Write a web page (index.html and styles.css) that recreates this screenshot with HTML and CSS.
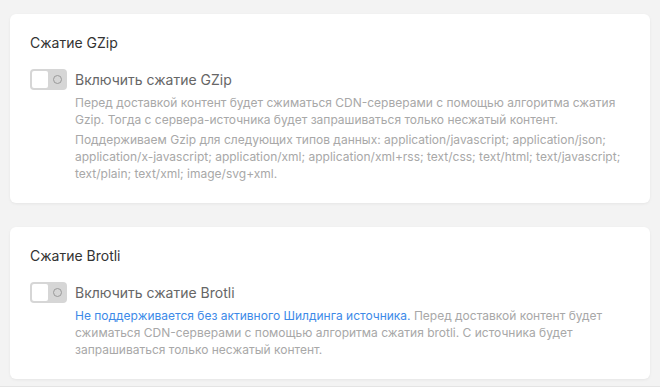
FILE: index.html
```html
<!DOCTYPE html>
<html lang="ru">
<head>
    <meta charset="UTF-8">
    <meta name="viewport" content="width=device-width, initial-scale=1.0">
    <title>Сжатие</title>
    <link rel="stylesheet" href="styles.css">
</head>
<body>
    <div class="page">
        <div class="card">
            <h3 class="card-title">Сжатие GZip</h3>
            <div class="option">
                <span class="toggle"><span class="knob"></span><span class="off-mark"></span></span>
                <div class="option-body">
                    <div class="option-label">Включить сжатие GZip</div>
                    <p class="hint">Перед доставкой контент будет сжиматься CDN-серверами с помощью алгоритма сжатия Gzip. Тогда с сервера-источника будет запрашиваться только несжатый контент.</p>
                    <p class="hint">Поддерживаем Gzip для следующих типов данных: application/javascript; application/json; application/x-javascript; application/xml; application/xml+rss; text/css; text/html; text/javascript; text/plain; text/xml; image/svg+xml.</p>
                </div>
            </div>
        </div>

        <div class="card">
            <h3 class="card-title">Сжатие Brotli</h3>
            <div class="option">
                <span class="toggle"><span class="knob"></span><span class="off-mark"></span></span>
                <div class="option-body">
                    <div class="option-label">Включить сжатие Brotli</div>
                    <p class="hint"><span class="link">Не поддерживается без активного Шилдинга источника.</span> Перед доставкой контент будет сжиматься CDN-серверами с помощью алгоритма сжатия brotli. С источника будет запрашиваться только несжатый контент.</p>
                </div>
            </div>
        </div>
    </div>
    <div class="footer"></div>
</body>
</html>
```

FILE: styles.css
```css
body {
    margin: 0;
    background-color: #f3f3f3;
    font-family: Inter, "Noto Sans", sans-serif;
}

.page {
    padding: 14px 10px 0;
    display: flex;
    flex-direction: column;
    gap: 24px;
}

.card {
    background-color: white;
    border-radius: 6px;
    box-shadow: 0 1px 3px rgba(0, 0, 0, 0.06);
    padding: 19px 20px 21px;
}

.card-title {
    margin: 0;
    font-size: 14px;
    font-weight: 400;
    line-height: 20px;
    color: #333;
}

.option {
    display: flex;
    gap: 8px;
    margin-top: 16px;
}

.toggle {
    flex: none;
    display: flex;
    align-items: center;
    justify-content: space-between;
    box-sizing: border-box;
    width: 37px;
    height: 21px;
    padding: 2px 5px 2px 2px;
    background-color: #d6d6d6;
    border-radius: 4px;
}

.knob {
    width: 16px;
    height: 17px;
    background-color: white;
    border-radius: 2px;
}

.off-mark {
    box-sizing: border-box;
    width: 9px;
    height: 9px;
    border: 1.5px solid #9a9a9a;
    border-radius: 50%;
}

.option-body {
    flex: 1;
}

.option-label {
    font-size: 14px;
    line-height: 21px;
    color: #666;
}

.hint {
    margin: 3px 0 0;
    font-size: 12px;
    line-height: 17px;
    color: #a8a8a8;
}

.option-label + .hint {
    margin-top: 4px;
}

.link {
    color: #3d8ae8;
}

.footer {
    margin-top: 7px;
    height: 2px;
    border-top: 1px solid #e4e4e4;
    background-color: #f7f7f7;
}
```
